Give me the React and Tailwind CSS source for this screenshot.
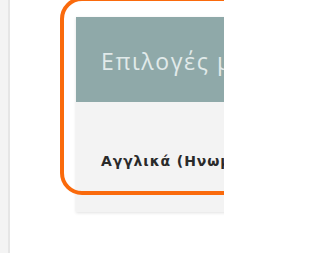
import React from "react";

const App = () => {
  return (
    <div className="relative flex h-[253px] w-[224px] overflow-hidden bg-white">
      <div className="h-full w-[10px] shrink-0 border-r-2 border-[#e6e6e6] bg-[#f4f4f4]" />

      <div className="ml-[66px] mt-[17px] w-[320px] shrink-0 self-start shadow-[0_1px_3px_rgba(0,0,0,0.12)]">
        <div className="flex h-[85px] items-center bg-[#8fa9a9] pl-[25px] pt-[3px]">
          <span className="whitespace-nowrap font-['Open_Sans',sans-serif] text-[23px] tracking-[1.6px] text-[#e1eaea]">
            Επιλογές μορφοποίησης
          </span>
        </div>
        <div className="h-[110px] bg-[#f3f3f3] pl-[25px] pt-[46px]">
          <span className="whitespace-nowrap font-['DejaVu_Sans',sans-serif] text-[14px] font-bold tracking-[0.9px] text-[#2a2a2a]">
            Αγγλικά (Ηνωμένο Βασίλειο)
          </span>
        </div>
      </div>

      {/* highlight ring drawn over the panel */}
      <div className="pointer-events-none absolute left-[60px] top-[-3px] h-[198px] w-[320px] rounded-[22px] border-4 border-[#fa6a0c]" />
    </div>
  );
};

export default App;
